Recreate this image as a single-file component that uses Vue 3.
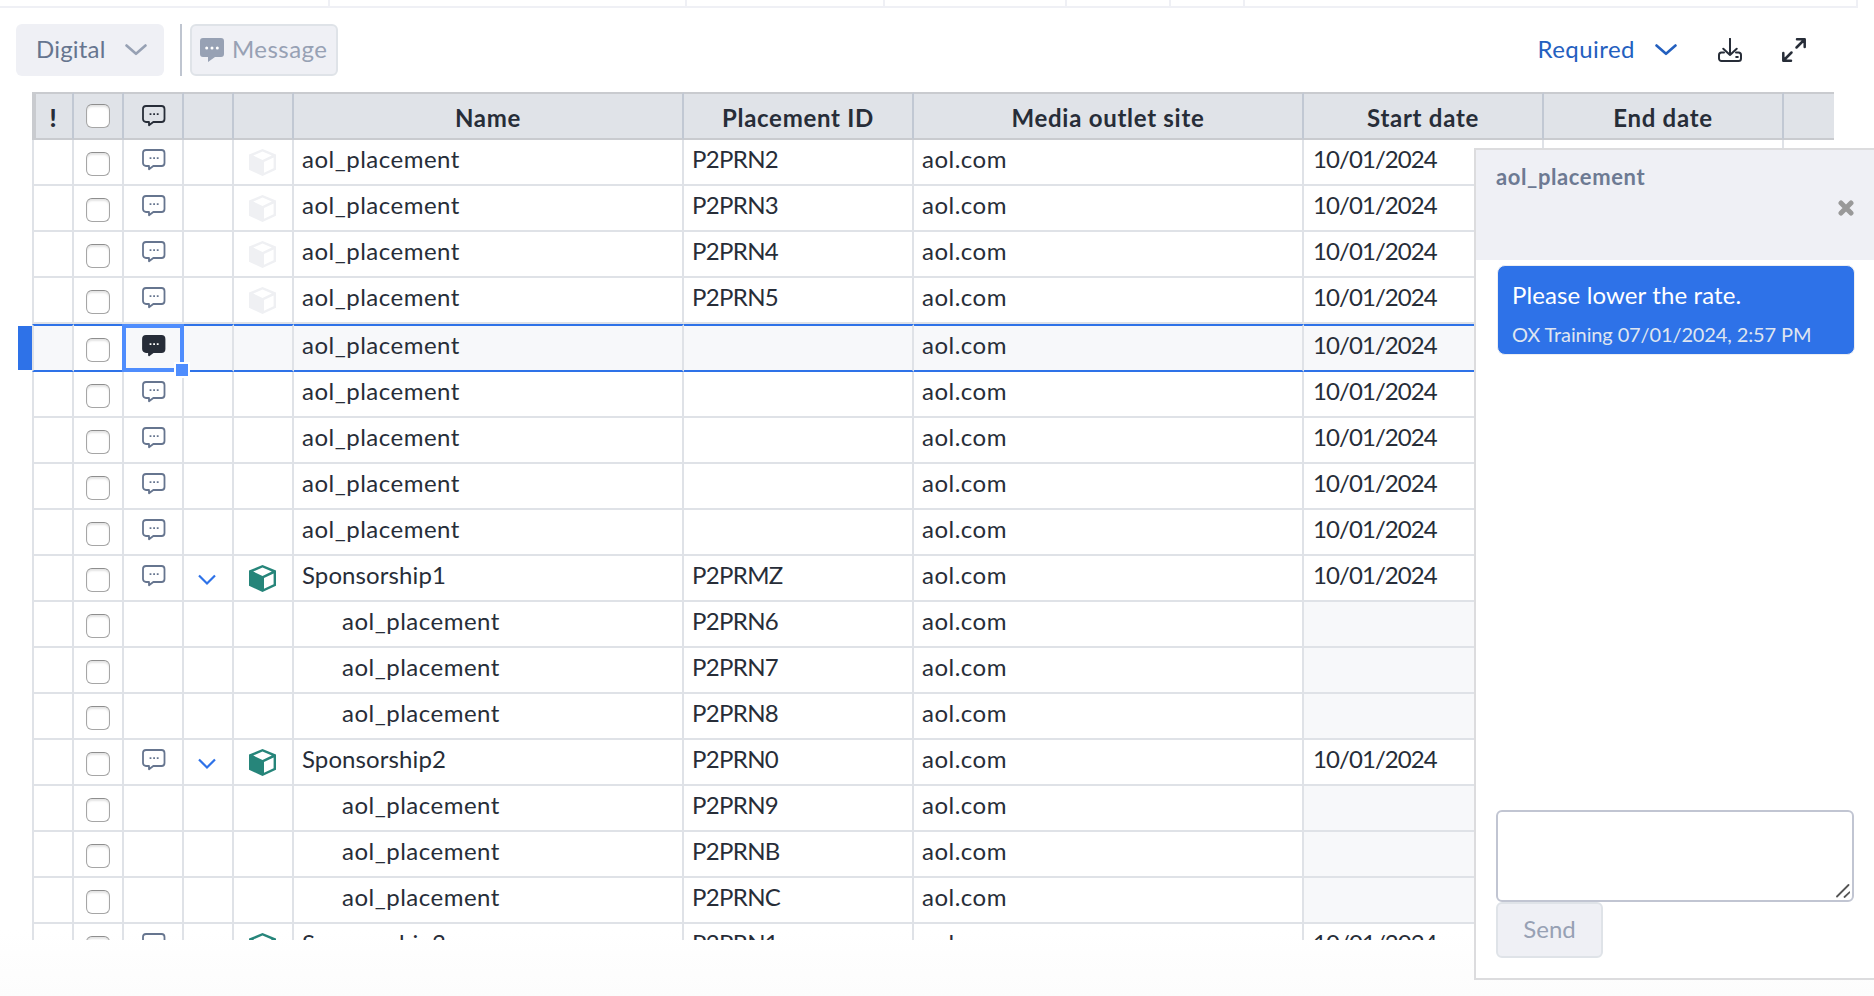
<template>
  <div class="page">
    <div class="top-strip">
      <span v-for="(w, i) in stripWidths" :key="i" :style="{ width: w + 'px' }"></span>
    </div>

    <div class="toolbar">
      <button class="type-btn" type="button">
        <span class="btn-label digital">Digital</span>
        <svg class="chevron" viewBox="0 0 22 12">
          <path d="M1.5 1.5 11 9.8 20.5 1.5" />
        </svg>
      </button>
      <span class="separator"></span>
      <button class="message-btn" type="button" disabled>
        <svg class="message-icon" viewBox="0 0 24 24">
          <path d="M3 0h18a3 3 0 0 1 3 3v13a3 3 0 0 1-3 3h-6l-7 5v-5H3a3 3 0 0 1-3-3V3a3 3 0 0 1 3-3z" />
          <g class="dots">
            <circle cx="6.7" cy="10" r="1.5" />
            <circle cx="12" cy="10" r="1.5" />
            <circle cx="17.3" cy="10" r="1.5" />
          </g>
        </svg>
        <span class="btn-label">Message</span>
      </button>
      <div class="toolbar-right">
        <span class="btn-label required">Required</span>
        <svg class="chevron blue" viewBox="0 0 22 12">
          <path d="M1.5 1.5 11 9.8 20.5 1.5" />
        </svg>
        <svg class="download-icon" viewBox="0 0 24 24">
          <path d="M12 .8V17M5.3 10.8 12 17l6.7-6.2" />
          <path d="M6 14.4H3.5A2.5 2.5 0 0 0 1 16.9v3.6A2.5 2.5 0 0 0 3.5 23h17a2.5 2.5 0 0 0 2.5-2.5v-3.600a2.500 2.500 0 0 0-2.500-2.500H18" />
          <path d="M18.2 18.9h1.6" />
        </svg>
        <svg class="expand-icon" viewBox="0 0 24 24">
          <path d="M14.5 9.5 22 2M15 1.3h7.7V9M9.5 14.5 2 22M1.3 15v7.7H9" />
        </svg>
      </div>
    </div>

    <div class="grid-wrap">
      <div class="grid">
        <div class="row head">
          <div class="cell bang">!</div>
          <div class="cell"><span class="checkbox"></span></div>
          <div class="cell">
            <svg class="comment dark" viewBox="0 0 24 22">
              <path :d="commentPath" />
              <path class="dots" :d="dotsPath" />
            </svg>
          </div>
          <div class="cell"></div>
          <div class="cell"></div>
          <div class="cell title" v-for="title in titles" :key="title">{{ title }}</div>
          <div class="cell last"></div>
        </div>

        <div
          v-for="(row, index) in rows"
          :key="index"
          class="row"
          :class="{ selected: row.selected }"
        >
          <div class="cell"></div>
          <div class="cell check"><span class="checkbox"></span></div>
          <div class="cell" :class="{ focus: row.selected }">
            <svg
              v-if="row.date"
              class="comment"
              :class="{ filled: row.selected }"
              viewBox="0 0 24 22"
            >
              <path :d="commentPath" />
              <path class="dots" :d="dotsPath" />
            </svg>
            <span v-if="row.selected" class="handle"></span>
          </div>
          <div class="cell">
            <svg v-if="row.group" class="toggle" viewBox="0 0 18 12">
              <path d="M1 1.5 9 9.5l8-8" />
            </svg>
          </div>
          <div class="cell">
            <svg
              v-if="row.box"
              class="box"
              :class="{ green: row.group }"
              viewBox="0 0 27 27"
            >
              <path
                fill-rule="evenodd"
                d="M13.500 0 27 5.600v15.200L13.500 27 0 20.800V5.600zM13.500 2.600 4.200 6.500l9.300 4.400 9.300-4.400zM24.600 8.400l-9.600 4.700v10.600l9.600-4.500z"
              />
            </svg>
          </div>
          <div class="cell text" :class="{ group: row.group, child: !row.date }">
            {{ row.name }}
          </div>
          <div class="cell text pid">{{ row.id }}</div>
          <div class="cell text">aol.com</div>
          <div class="cell text date" :class="{ locked: !row.date }">{{ row.date }}</div>
          <div class="cell"></div>
          <div class="cell last"></div>
        </div>
      </div>
    </div>

    <aside class="panel">
      <div class="panel-head">
        <span class="panel-title">aol_placement</span>
        <svg class="close" viewBox="0 0 16 16">
          <path d="M3 3l10 10M13 3 3 13" />
        </svg>
      </div>
      <div class="bubble">
        <p class="bubble-text">Please lower the rate.</p>
        <p class="bubble-meta">OX Training 07/01/2024, 2:57 PM</p>
      </div>
      <div class="reply">
        <svg class="grip" viewBox="0 0 14 14">
          <path d="M1 12.5 12.5 1M8.5 13 13.5 8.3" />
        </svg>
      </div>
      <button class="send-btn" type="button" disabled>Send</button>
    </aside>
  </div>
</template>

<script setup>
const stripWidths = [330, 357, 198, 182, 104, 74, 613];

const titles = ["Name", "Placement ID", "Media outlet site", "Start date", "End date"];

const commentPath =
  "M4 1h15.5a3 3 0 0 1 3 3v10a3 3 0 0 1-3 3h-8.200L7 20.300V17H4a3 3 0 0 1-3-3V4a3 3 0 0 1 3-3z";
const dotsPath = "M7.600 9.200h1.800M11.200 9.200h1.800M14.800 9.200h1.800";

const date = "10/01/2024";

// Plain placement line
const placement = (id, extra = {}) => ({ name: "aol_placement", id, date, ...extra });

// Package line followed by its child placements
const group = (name, id, children) => [
  { name, id, date, group: true, box: true },
  ...children.map((child) => ({ name: "aol_placement", id: child })),
];

const rows = [
  placement("P2PRN2", { box: true }),
  placement("P2PRN3", { box: true }),
  placement("P2PRN4", { box: true }),
  placement("P2PRN5", { box: true }),
  placement("", { selected: true }),
  placement(""),
  placement(""),
  placement(""),
  placement(""),
  ...group("Sponsorship1", "P2PRMZ", ["P2PRN6", "P2PRN7", "P2PRN8"]),
  ...group("Sponsorship2", "P2PRN0", ["P2PRN9", "P2PRNB", "P2PRNC"]),
  ...group("Sponsorship3", "P2PRN1", []),
];
</script>

<style>
body {
  margin: 0;
  background: #fff;
}
</style>

<style scoped>
.page {
  position: relative;
  width: 1874px;
  height: 996px;
  overflow: hidden;
  background: linear-gradient(#fff 0, #fff 930px, #fcfcfc 996px);
  color: #272d38;
  font-family: Lato, "Open Sans", sans-serif;
  font-size: 24px;
  line-height: 29px;
}

.page * {
  box-sizing: border-box;
}

button {
  font: inherit;
  margin: 0;
}

svg {
  display: block;
  flex: none;
  fill: none;
}

.top-strip {
  display: flex;
  width: 1858px;
  height: 8px;
  border-bottom: 2px solid #eff0f5;
}

.top-strip span {
  border-right: 2px solid #eff0f5;
}

/* Toolbar */
.toolbar {
  display: flex;
  align-items: center;
  height: 84px;
  padding: 0 68px 0 16px;
}

.btn-label {
  padding-bottom: 3px;
  letter-spacing: 0.45px;
}

.btn-label.digital {
  letter-spacing: 0.2px;
}

.type-btn {
  display: flex;
  align-items: center;
  justify-content: space-between;
  width: 148px;
  height: 52px;
  padding: 0 17px 0 20px;
  border: none;
  border-radius: 6px;
  background: #eff0f5;
  color: #66758f;
}

.chevron {
  width: 22px;
  height: 12px;
  stroke: #97a1b4;
  stroke-width: 2.6;
  stroke-linecap: round;
  stroke-linejoin: round;
}

.separator {
  width: 2px;
  height: 52px;
  margin: 0 8px 0 16px;
  background: #bfc5d0;
}

.message-btn {
  display: flex;
  align-items: center;
  width: 148px;
  height: 52px;
  padding: 0 0 0 8px;
  border: 2px solid #dfe3e8;
  border-radius: 6px;
  background: #eff0f5;
  color: #97a1b4;
}

.message-icon {
  width: 24px;
  height: 24px;
  margin-right: 8px;
  fill: #97a1b4;
}

.message-icon .dots {
  fill: #fff;
}

.toolbar-right {
  display: flex;
  align-items: center;
  margin-left: auto;
}

.required {
  color: #2460bf;
}

.chevron.blue {
  margin: 0 41px 0 20px;
  stroke: #2460bf;
}

.download-icon,
.expand-icon {
  width: 24px;
  height: 24px;
  stroke: #272d38;
  stroke-width: 2;
  stroke-linecap: round;
  stroke-linejoin: round;
}

.expand-icon {
  margin-left: 40px;
  stroke-width: 2.5;
}

/* Grid */
.grid-wrap {
  height: 848px;
  padding-left: 32px;
  overflow: hidden;
}

.grid {
  width: 1802px;
}

.row {
  position: relative;
  display: grid;
  grid-template-columns: 42px 50px 60px 50px 60px 390px 230px 390px 240px 240px 50px;
  height: 46px;
}

.cell {
  position: relative;
  display: flex;
  justify-content: center;
  border-right: 2px solid #dfe2e7;
  border-bottom: 2px solid #dfe2e7;
}

.cell:first-child {
  border-left: 2px solid #dfe2e7;
}

.cell.last {
  border-right: none;
}

.row.head {
  height: 48px;
  font-weight: 700;
}

.head .cell {
  align-items: center;
  border-top: 2px solid #c9cbcf;
  border-right-color: #c1c8d3;
  border-bottom-color: #c9cbcf;
  background: #e0e3e8;
}

.head .cell:first-child {
  border-left: 4px solid #c9cbcf;
}

.head .bang {
  padding: 2px 2px 0 0;
  font-size: 25px;
  font-weight: 900;
}

.head .title {
  padding-top: 2px;
  letter-spacing: 0.72px;
}

.cell.text {
  justify-content: flex-start;
  padding: 4px 0 0 8px;
  letter-spacing: 0.5px;
  white-space: nowrap;
}

.cell.group {
  letter-spacing: 0.1px;
}

.cell.pid {
  letter-spacing: -0.65px;
}

.cell.date {
  padding-left: 9px;
  letter-spacing: -0.93px;
}

.cell.child {
  padding-left: 48px;
}

.cell.locked {
  background: #f7f8fa;
}

.checkbox {
  width: 24px;
  height: 24px;
  margin-top: 12px;
  border: 1px solid #a6a6a6;
  border-top-color: #8e8e8e;
  border-radius: 6px;
  background: #fff;
  box-shadow: inset 0 2px 2px #e4e4e4;
}

.head .checkbox {
  margin-top: 0;
}

.comment {
  width: 24px;
  height: 22px;
  margin-top: 9px;
  margin-left: 1px;
  stroke: #66758f;
  stroke-width: 1.8;
  stroke-linejoin: round;
}

.head .comment {
  margin-top: 0;
}

.comment.dark {
  stroke: #272d38;
}

.comment.filled {
  fill: #272d38;
  stroke: #272d38;
}

.comment.filled .dots {
  stroke: #fff;
}

.toggle {
  width: 18px;
  height: 12px;
  margin: 18px 2px 0 0;
  stroke: #2e72e8;
  stroke-width: 2.2;
}

.box {
  width: 27px;
  height: 27px;
  margin: 9px 1px 0 0;
  fill: #eff0f3;
}

.box.green {
  fill: #26857a;
}

.row.selected {
  height: 48px;
}

.selected .cell {
  border-top: 2px solid #2e72e8;
  border-bottom-color: #2e72e8;
  background: #f7f8fa;
}

.selected .check {
  background: #fff;
}

/* Marker at the left of the selected row */
.selected::before {
  content: "";
  position: absolute;
  left: -14px;
  top: 2px;
  width: 14px;
  height: 44px;
  background: #2e72e8;
}

.focus::after {
  content: "";
  position: absolute;
  inset: -2px;
  border: 4px solid #4f8dfd;
}

.handle {
  position: absolute;
  right: -8px;
  bottom: -8px;
  z-index: 2;
  width: 16px;
  height: 16px;
  border: 2px solid #fff;
  background: #4f8dfd;
}

/* Message panel */
.panel {
  position: absolute;
  left: 1474px;
  top: 148px;
  display: flex;
  flex-direction: column;
  align-items: flex-start;
  width: 402px;
  height: 832px;
  border: 2px solid #dcdcde;
  background: #fff;
}

.panel-head {
  display: flex;
  justify-content: space-between;
  width: 398px;
  height: 110px;
  padding: 12px 20px 0 20px;
  background: #eff0f5;
}

.panel-title {
  color: #6d7a93;
  font-size: 22px;
  font-weight: 700;
  letter-spacing: 0.6px;
}

.close {
  width: 16px;
  height: 16px;
  margin-top: 38px;
  stroke: #999;
  stroke-width: 5;
  stroke-linecap: round;
}

.bubble {
  width: 358px;
  height: 90px;
  margin: 5px 0 0 21px;
  padding: 14px 0 0 14px;
  border: 1px solid #eceef2;
  border-radius: 8px;
  background: #2e72e8;
  color: #fff;
  white-space: nowrap;
}

.bubble p {
  margin: 0;
}

.bubble .bubble-text {
  letter-spacing: 0.12px;
}

.bubble .bubble-meta {
  margin-top: 11px;
  color: #dfe5f0;
  font-size: 20px;
  letter-spacing: -0.12px;
}

.reply {
  display: flex;
  align-items: flex-end;
  justify-content: flex-end;
  width: 358px;
  height: 92px;
  margin: 455px 0 0 20px;
  padding: 2px;
  border: 2px solid #c1c5d2;
  border-radius: 6px;
}

.grip {
  width: 14px;
  height: 14px;
  stroke: #555;
  stroke-width: 1.8;
  stroke-linecap: round;
}

.send-btn {
  width: 107px;
  height: 56px;
  margin-left: 20px;
  padding: 0 0 3px;
  border: 2px solid #dfe3e8;
  border-radius: 6px;
  background: #eff0f5;
  color: #97a1b4;
}
</style>
